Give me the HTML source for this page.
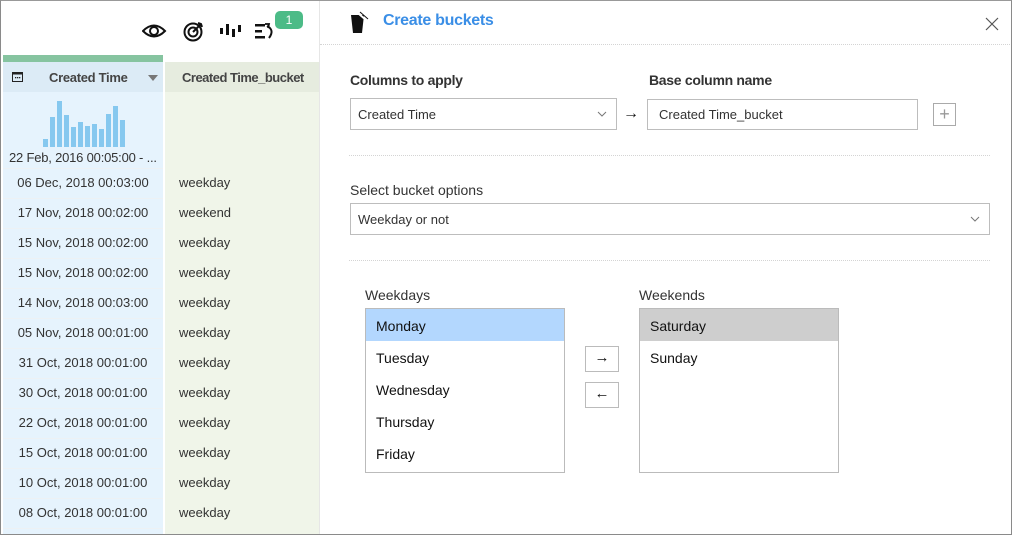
<!DOCTYPE html>
<html><head><meta charset="utf-8"><style>
*{box-sizing:border-box;margin:0;padding:0}
body{width:1012px;height:535px;overflow:hidden;background:#fff;font-family:"Liberation Sans",sans-serif;position:relative}
.abs{position:absolute}
.frame{position:absolute;left:0;top:0;width:1012px;height:535px;border:1px solid #8a8a8a;border-top-color:#999;pointer-events:none;z-index:10}
.l{font-size:13px;color:#333}
.row{position:absolute;left:3px;width:316px;height:30px;font-size:13px;color:#333}
.row:before{content:"";position:absolute;left:0;top:0;width:160px;border-top:1px solid #edf1f4}
.row .a{position:absolute;left:0;width:160px;text-align:center;top:7px}
.row .b{position:absolute;left:176px;top:7px}
.box{position:absolute;border:1px solid #bdbdbd;background:#fff;font-size:13px;color:#333}
.list{position:absolute;border:1px solid #bbb;background:#fff}
.list div{height:32px;line-height:34px;padding-left:10px;font-size:14px;color:#111}
.dot{position:absolute;left:349px;width:641px;border-top:1px dotted #d4d4d4}
</style></head><body>
<div class="frame"></div>
<div class="abs" style="left:3px;top:55px;width:160px;height:7px;background:#86c4a0"></div>
<div class="abs" style="left:3px;top:62px;width:160px;height:473px;background:#e6f3fd"></div>
<div class="abs" style="left:3px;top:62px;width:160px;height:30px;background:#dcebf6"></div>
<div class="abs" style="left:165px;top:62px;width:154px;height:473px;background:#f0f5e9"></div>
<div class="abs" style="left:165px;top:62px;width:154px;height:30px;background:#e6ecdf"></div>
<div class="abs" style="left:319px;top:0;width:1px;height:535px;background:#e6e6e6"></div>
<svg class="abs" style="left:142px;top:19px" width="170" height="26" viewBox="0 0 170 26">
<path d="M1 12 Q12 1 23 12 Q12 23 1 12Z" fill="none" stroke="#111" stroke-width="2"/><circle cx="12" cy="12" r="4" fill="none" stroke="#111" stroke-width="2"/>
<circle cx="51" cy="13" r="8.5" fill="none" stroke="#111" stroke-width="2"/><circle cx="51" cy="13" r="4.5" fill="none" stroke="#111" stroke-width="2"/><path d="M51 13 L59 5 M56 4 L59 5 L60 8" stroke="#111" stroke-width="2" fill="none"/>
<rect x="78" y="9" width="3" height="6" fill="#111"/><rect x="84" y="5" width="3" height="11" fill="#111"/><rect x="90" y="10" width="3" height="8" fill="#111"/><rect x="96" y="6" width="3" height="7" fill="#111"/>
<rect x="113" y="5" width="10" height="2.5" fill="#111"/><rect x="113" y="11" width="7" height="2.5" fill="#111"/><rect x="113" y="17" width="10" height="2.5" fill="#111"/><path d="M125 7 Q133 11 127 19" stroke="#111" stroke-width="2" fill="none"/><path d="M123 5 L127 5 L126 9" stroke="#111" stroke-width="1.8" fill="none"/>
</svg>
<div class="abs" style="left:275px;top:11px;width:28px;height:18px;background:#4cbb87;border-radius:5px;color:#fff;font-size:12px;text-align:center;line-height:18px">1</div>
<svg class="abs" style="left:12px;top:71px" width="11" height="11" viewBox="0 0 11 11"><rect x="0.5" y="1.5" width="10" height="9" fill="none" stroke="#222"/><rect x="0.5" y="1.5" width="10" height="2" fill="#222"/><rect x="3" y="6" width="1.3" height="1.3" fill="#222"/><rect x="5" y="6" width="1.3" height="1.3" fill="#222"/><rect x="7" y="6" width="1.3" height="1.3" fill="#222"/></svg>
<div class="abs" style="left:49px;top:70px;font-size:13px;font-weight:bold;color:#444;letter-spacing:-0.3px">Created Time</div>
<div class="abs" style="left:148px;top:75px;width:0;height:0;border-left:5px solid transparent;border-right:5px solid transparent;border-top:6px solid #777"></div>
<div class="abs" style="left:182px;top:70px;font-size:13px;font-weight:bold;color:#444;letter-spacing:-0.5px">Created Time_bucket</div>
<svg class="abs" style="left:43px;top:100px" width="84" height="47">
<g fill="#86c8ef">
<rect x="0" y="39" width="5" height="8"/><rect x="7" y="17" width="5" height="30"/><rect x="14" y="1" width="5" height="46"/><rect x="21" y="15" width="5" height="32"/><rect x="28" y="27" width="5" height="20"/><rect x="35" y="22" width="5" height="25"/><rect x="42" y="26" width="5" height="21"/><rect x="49" y="24" width="5" height="23"/><rect x="56" y="29" width="5" height="18"/><rect x="63" y="14" width="5" height="33"/><rect x="70" y="6" width="5" height="41"/><rect x="77" y="20" width="5" height="27"/></g></svg>
<div class="abs" style="left:9px;top:150px;font-size:13px;color:#333;letter-spacing:-0.2px">22 Feb, 2016 00:05:00 - ...</div>
<div class="row" style="top:168px"><span class="a">06 Dec, 2018 00:03:00</span><span class="b">weekday</span></div>
<div class="row" style="top:198px"><span class="a">17 Nov, 2018 00:02:00</span><span class="b">weekend</span></div>
<div class="row" style="top:228px"><span class="a">15 Nov, 2018 00:02:00</span><span class="b">weekday</span></div>
<div class="row" style="top:258px"><span class="a">15 Nov, 2018 00:02:00</span><span class="b">weekday</span></div>
<div class="row" style="top:288px"><span class="a">14 Nov, 2018 00:03:00</span><span class="b">weekday</span></div>
<div class="row" style="top:318px"><span class="a">05 Nov, 2018 00:01:00</span><span class="b">weekday</span></div>
<div class="row" style="top:348px"><span class="a">31 Oct, 2018 00:01:00</span><span class="b">weekday</span></div>
<div class="row" style="top:378px"><span class="a">30 Oct, 2018 00:01:00</span><span class="b">weekday</span></div>
<div class="row" style="top:408px"><span class="a">22 Oct, 2018 00:01:00</span><span class="b">weekday</span></div>
<div class="row" style="top:438px"><span class="a">15 Oct, 2018 00:01:00</span><span class="b">weekday</span></div>
<div class="row" style="top:468px"><span class="a">10 Oct, 2018 00:01:00</span><span class="b">weekday</span></div>
<div class="row" style="top:498px"><span class="a">08 Oct, 2018 00:01:00</span><span class="b">weekday</span></div>
<div class="row" style="top:528px"></div>
<svg class="abs" style="left:348px;top:11px" width="24" height="24" viewBox="0 0 24 24"><path d="M3 4 L16 4 L14 22 L5 22Z" fill="#111"/><path d="M11 3 L18 9" stroke="#fff" stroke-width="2"/><path d="M12 1 L20 8" stroke="#111" stroke-width="1"/></svg>
<div class="abs" style="left:383px;top:12px;font-size:16px;font-weight:bold;color:#3a8ee6;letter-spacing:-0.3px">Create buckets</div>
<svg class="abs" style="left:985px;top:17px" width="14" height="14"><path d="M1 1 L13 13 M13 1 L1 13" stroke="#555" stroke-width="1.2"/></svg>
<div class="abs" style="left:320px;top:44px;width:690px;border-top:1px dotted #d4d4d4"></div>
<div class="abs" style="left:350px;top:72px;font-size:14px;font-weight:bold;color:#333;letter-spacing:-0.3px">Columns to apply</div>
<div class="abs" style="left:649px;top:72px;font-size:14px;font-weight:bold;color:#333;letter-spacing:-0.3px">Base column name</div>
<div class="box" style="left:350px;top:98px;width:267px;height:32px"><span class="abs" style="left:7px;top:8px">Created Time</span><svg class="abs" style="left:246px;top:12px" width="10" height="6"><path d="M1 1 L5 5 L9 1" stroke="#777" fill="none"/></svg></div>
<div class="abs" style="left:623px;top:105px;font-size:16px;color:#111">→</div>
<div class="box" style="left:647px;top:99px;width:271px;height:31px"><span class="abs" style="left:11px;top:7px">Created Time_bucket</span></div>
<div class="box" style="left:933px;top:103px;width:23px;height:23px;border-color:#aaa;color:#999;font-size:18px;text-align:center;line-height:20px">+</div>
<div class="dot" style="top:155px"></div>
<div class="abs l" style="left:350px;top:182px;font-size:14px">Select bucket options</div>
<div class="box" style="left:350px;top:203px;width:640px;height:32px"><span class="abs" style="left:7px;top:8px">Weekday or not</span><svg class="abs" style="left:619px;top:12px" width="10" height="6"><path d="M1 1 L5 5 L9 1" stroke="#777" fill="none"/></svg></div>
<div class="dot" style="top:260px"></div>
<div class="abs l" style="left:365px;top:287px;font-size:14px">Weekdays</div>
<div class="abs l" style="left:639px;top:287px;font-size:14px">Weekends</div>
<div class="list" style="left:365px;top:308px;width:200px;height:165px"><div style="background:#b3d7fe">Monday</div><div>Tuesday</div><div>Wednesday</div><div>Thursday</div><div>Friday</div></div>
<div class="list" style="left:639px;top:308px;width:200px;height:165px"><div style="background:#cecece">Saturday</div><div>Sunday</div></div>
<div class="box" style="left:585px;top:346px;width:34px;height:26px;border-color:#bbb;text-align:center;line-height:22px;font-size:15px;color:#111">→</div>
<div class="box" style="left:585px;top:382px;width:34px;height:26px;border-color:#bbb;text-align:center;line-height:22px;font-size:15px;color:#111">←</div>
</body></html>
